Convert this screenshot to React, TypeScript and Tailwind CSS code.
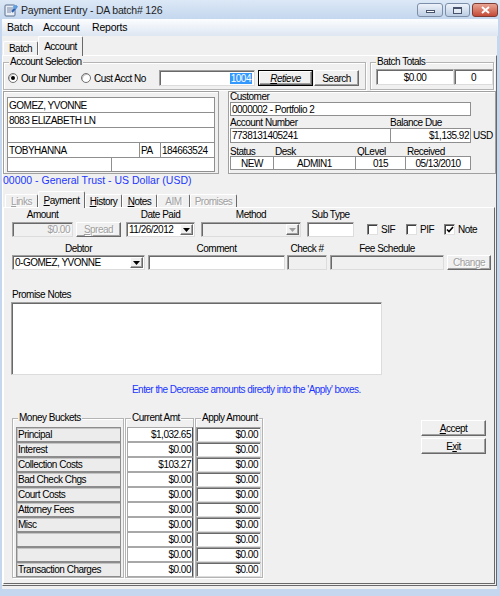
import React from "react";

const FONT = "font-['Liberation_Sans',Arial,sans-serif]";
const sunken =
  "border border-[#a0a0a0] border-r-[#dcdcdc] border-b-[#dcdcdc] shadow-[inset_1px_1px_0_#696969]";
const raised =
  "bg-[#f0f0f0] border border-white border-r-[#696969] border-b-[#696969] shadow-[inset_-1px_-1px_0_#a0a0a0]";
const grayText = "text-[#a0a0a0] [text-shadow:1px_1px_0_#fff]";

const buckets: [string, string][] = [
  ["Principal", "$1,032.65"],
  ["Interest", "$0.00"],
  ["Collection Costs", "$103.27"],
  ["Bad Check Chgs", "$0.00"],
  ["Court Costs", "$0.00"],
  ["Attorney Fees", "$0.00"],
  ["Misc", "$0.00"],
  ["", "$0.00"],
  ["", "$0.00"],
  ["Transaction Charges", "$0.00"],
];

function Group({ label, className = "", children }: { label: string; className?: string; children?: React.ReactNode }) {
  return (
    <fieldset className={"border border-[#b4b4b4] shadow-[inset_1px_1px_0_#fff,1px_1px_0_#fff] " + className}>
      <legend className="ml-[5px] px-[1px] h-[12px] leading-[12px] bg-[#f0f0f0]">{label}</legend>
      {children}
    </fieldset>
  );
}

function DropBtn({ disabled }: { disabled?: boolean }) {
  return (
    <div className={raised + " w-[13px] h-full shrink-0 flex items-center justify-center"}>
      <svg width="7" height="4" viewBox="0 0 7 4">
        <path d="M0 0h7L3.5 4z" fill={disabled ? "#a0a0a0" : "#000"} />
      </svg>
    </div>
  );
}

function Radio({ checked }: { checked?: boolean }) {
  return (
    <span className="w-[10px] h-[10px] rounded-full bg-white border border-[#707070] shadow-[inset_1px_1px_0_#c0c0c0] flex items-center justify-center shrink-0">
      {checked && <span className="w-[4px] h-[4px] rounded-full bg-black" />}
    </span>
  );
}

function Check({ checked }: { checked?: boolean }) {
  return (
    <span className="w-[11px] h-[11px] bg-white border border-[#808080] border-r-[#e0e0e0] border-b-[#e0e0e0] shadow-[inset_1px_1px_0_#404040] flex items-center justify-center shrink-0">
      {checked && (
        <svg width="8" height="7" viewBox="0 0 8 7">
          <path d="M1 3.5l2 2L7 1" stroke="#000" strokeWidth="1.6" fill="none" />
        </svg>
      )}
    </span>
  );
}

function AppIcon() {
  return (
    <svg width="14" height="14" viewBox="0 0 14 14">
      <rect x="1" y="2" width="10" height="11" rx="1" fill="#e8eef6" stroke="#5a6f8c" />
      <path d="M3 5h6M3 7h6M3 9h4" stroke="#7a8ca6" />
      <path d="M8 9l5-6" stroke="#2d5fb0" strokeWidth="2" />
      <circle cx="11" cy="4" r="2" fill="#5fa0e0" />
    </svg>
  );
}

export default function App() {
  return (
    <div className={"w-[500px] h-[596px] flex flex-col overflow-hidden bg-[#c4d7ee] text-black text-[10px] tracking-[-0.5px] " + FONT}>
      {/* title bar */}
      <div className="h-[19px] shrink-0 flex bg-linear-to-b from-[#dce8f6] to-[#c4d7ee]">
        <div className="ml-[4px] mt-[3px]">
          <AppIcon />
        </div>
        <span className="ml-[3px] text-[10.5px] tracking-[-0.2px] leading-[21px] text-[#1e1e1e]">Payment Entry - DA batch# 126</span>
        <div className="ml-auto mr-[2px] mt-[3px] flex gap-[2px] h-[14px]">
          <div className="w-[26px] rounded-[3px] border border-[#7d8ea8] bg-linear-to-b from-[#eef3fa] to-[#bccde3] flex items-end justify-center pb-[3px]">
            <span className="w-[9px] h-[3px] bg-white border border-[#46536a]" />
          </div>
          <div className="w-[25px] rounded-[3px] border border-[#7d8ea8] bg-linear-to-b from-[#eef3fa] to-[#bccde3] flex items-center justify-center">
            <span className="w-[9px] h-[7px] border border-[#46536a] border-t-2 bg-white/40" />
          </div>
          <div className="w-[26px] rounded-[3px] border border-[#7e3b33] bg-linear-to-b from-[#e8a493] to-[#c34a37] flex items-center justify-center">
            <svg width="9" height="8" viewBox="0 0 9 8">
              <path d="M1 1l7 6M8 1L1 7" stroke="#fff" strokeWidth="2" />
            </svg>
          </div>
        </div>
      </div>

      {/* menu bar */}
      <div className="h-[17px] shrink-0 mx-[2px] flex items-center bg-linear-to-b from-[#fcfdfe] to-[#dde6f2] text-[10.5px] tracking-[-0.2px]">
        <span className="ml-[5px] w-[36px]">Batch</span>
        <span className="w-[49px]">Account</span>
        <span>Reports</span>
      </div>

      {/* client */}
      <div className="flex-1 min-h-0 ml-[2px] mr-[3px] mb-[7px] bg-[#f0f0f0] flex flex-col">
        <div className="h-[19px] shrink-0 flex items-end pl-[1px]">
          <div className="w-[35px] h-[14px] border-t border-l border-white border-r border-r-[#696969] rounded-t-[2px] flex items-center justify-center">Batch</div>
          <div className="w-[45px] h-[20px] -mb-[1px] relative bg-[#f0f0f0] border-t border-l border-white border-r border-r-[#696969] rounded-t-[2px] flex items-center justify-center">Account</div>
        </div>

        {/* outer panel */}
        <div className="flex-1 min-h-0 mb-[3px] flex flex-col border border-white border-r-[#696969] border-b-[#696969]">
          {/* row 1 */}
          <div className="flex h-[34px] shrink-0">
            <Group label="Account Selection" className="w-[363px]">
              <div className="flex items-center h-[16px] mt-[2px]">
                <div className="w-[73px] pl-[4px] flex items-center gap-[3px]">
                  <Radio checked />
                  <span>Our Number</span>
                </div>
                <div className="w-[82px] pl-[4px] flex items-center gap-[3px]">
                  <Radio />
                  <span>Cust Acct No</span>
                </div>
                <div className={sunken + " bg-white w-[96px] h-full flex items-center justify-end pr-[2px]"}>
                  <span className="bg-[#3399ff] text-white leading-[11px] px-[1px]">1004</span>
                </div>
                <div className="ml-[3px] w-[55px] h-full border border-black">
                  <div className={raised + " h-full flex items-center justify-center italic"}>
                    <span>
                      <u>R</u>etieve
                    </span>
                  </div>
                </div>
                <div className={raised + " ml-[1px] w-[45px] h-full flex items-center justify-center"}>Search</div>
              </div>
            </Group>
            <Group label="Batch Totals" className="ml-[4px] w-[124px]">
              <div className="flex h-[16px] mt-[1px] pl-[5px]">
                <div className={sunken + " bg-white w-[78px] h-full flex items-center justify-center"}>$0.00</div>
                <div className={sunken + " bg-white w-[39px] h-full flex items-center justify-center"}>0</div>
              </div>
            </Group>
          </div>

          {/* row 2 */}
          <div className="flex h-[83px] shrink-0 mt-[1px]">
            <div className="w-[216px] border border-[#a0a0a0] shadow-[inset_1px_1px_0_#fff] pt-[5px] pl-[3px]">
              <div className="w-[208px] bg-white border border-[#8f8f8f] flex flex-col">
                <div className="h-[15px] border-b border-[#8f8f8f] flex items-center pl-[1px]">GOMEZ, YVONNE</div>
                <div className="h-[15px] border-b border-[#8f8f8f] flex items-center pl-[1px]">8083 ELIZABETH LN</div>
                <div className="h-[15px] border-b border-[#8f8f8f]" />
                <div className="h-[15px] border-b border-[#8f8f8f] flex">
                  <div className="w-[132px] border-r border-[#8f8f8f] flex items-center pl-[1px]">TOBYHANNA</div>
                  <div className="w-[21px] border-r border-[#8f8f8f] flex items-center pl-[1px]">PA</div>
                  <div className="flex-1 flex items-center pl-[1px]">184663524</div>
                </div>
                <div className="h-[13px] flex">
                  <div className="w-[104px] border-r border-[#8f8f8f]" />
                  <div className="flex-1" />
                </div>
              </div>
            </div>
            <div className="ml-[9px] w-[268px] border border-[#a0a0a0] shadow-[inset_1px_1px_0_#fff] pl-[1px] flex flex-col">
              <div className="h-[10px] leading-[10px]">Customer</div>
              <div className="w-[241px] h-[14px] bg-white border border-[#8f8f8f] flex items-center pl-[1px]">0000002 - Portfolio 2</div>
              <div className="flex h-[10px] leading-[10px] mt-[2px]">
                <span className="w-[160px]">Account Number</span>
                <span>Balance Due</span>
              </div>
              <div className="flex items-center h-[15px]">
                <div className="w-[161px] h-full bg-white border border-[#8f8f8f] flex items-center pl-[1px]">7738131405241</div>
                <div className="w-[81px] h-full -ml-[1px] bg-white border border-[#8f8f8f] flex items-center justify-end pr-[1px]">$1,135.92</div>
                <span className="ml-[2px]">USD</span>
              </div>
              <div className="flex h-[9px] leading-[9px] mt-[4px]">
                <span className="w-[45px]">Status</span>
                <span className="w-[82px]">Desk</span>
                <span className="w-[50px]">QLevel</span>
                <span>Received</span>
              </div>
              <div className="flex w-[241px] h-[14px] bg-white border border-[#8f8f8f]">
                <div className="w-[43px] border-r border-[#8f8f8f] flex items-center justify-center">NEW</div>
                <div className="w-[82px] border-r border-[#8f8f8f] flex items-center justify-center">ADMIN1</div>
                <div className="w-[50px] border-r border-[#8f8f8f] flex items-center justify-center">015</div>
                <div className="flex-1 flex items-center justify-center">05/13/2010</div>
              </div>
            </div>
          </div>

          {/* trust line */}
          <div className="h-[13px] shrink-0 leading-[13px] text-[10.5px] tracking-normal text-[#1b36ff]">
            00000 - General Trust - US Dollar (USD)
          </div>

          {/* lower tabs */}
          <div className="h-[20px] shrink-0 flex items-end pl-[2px]">
            <div className={"w-[33px] h-[13px] border-t border-l border-white border-r border-r-[#696969] rounded-t-[2px] flex items-center justify-center " + grayText}>
              <span>
                <u>L</u>inks
              </span>
            </div>
            <div className="w-[47px] h-[17px] -mb-[1px] relative bg-[#f0f0f0] border-t border-l border-white border-r border-r-[#696969] rounded-t-[2px] flex items-center justify-center">
              <span>
                <u>P</u>ayment
              </span>
            </div>
            <div className="w-[37px] h-[13px] border-t border-l border-white border-r border-r-[#696969] rounded-t-[2px] flex items-center justify-center">
              <span>
                <u>H</u>istory
              </span>
            </div>
            <div className="w-[35px] h-[13px] border-t border-l border-white border-r border-r-[#696969] rounded-t-[2px] flex items-center justify-center">
              <span>
                <u>N</u>otes
              </span>
            </div>
            <div className={"w-[33px] h-[13px] border-t border-l border-white border-r border-r-[#696969] rounded-t-[2px] flex items-center justify-center " + grayText}>AIM</div>
            <div className={"w-[47px] h-[13px] border-t border-l border-white border-r border-r-[#696969] rounded-t-[2px] flex items-center justify-center " + grayText}>Promises</div>
          </div>

          {/* payment panel */}
          <div className="flex-1 min-h-0 mr-[1px] mb-[1px] flex flex-col border border-white border-r-[#696969] border-b-[#696969]">
            {/* fields row 1 */}
            <div className="flex items-end mt-[1px] shrink-0">
              <div className="ml-[8px] w-[61px] flex flex-col items-center">
                <span className="h-[11px] leading-[11px] mb-[2px]">Amount</span>
                <div className={sunken + " bg-[#f0f0f0] w-full h-[15px] flex items-center justify-end pr-[2px] " + grayText}>$0.00</div>
              </div>
              <div className={raised + " ml-[3px] w-[45px] h-[15px] flex items-center justify-center " + grayText}>
                <span>
                  <u>S</u>pread
                </span>
              </div>
              <div className="ml-[5px] w-[69px] flex flex-col items-center">
                <span className="h-[11px] leading-[11px] mb-[2px]">Date Paid</span>
                <div className={sunken + " bg-white w-full h-[15px] flex items-center pl-[2px] pr-[1px] py-[1px]"}>
                  <span className="flex-1">11/26/2012</span>
                  <DropBtn />
                </div>
              </div>
              <div className="ml-[6px] w-[100px] flex flex-col items-center">
                <span className="h-[11px] leading-[11px] mb-[2px]">Method</span>
                <div className={sunken + " bg-[#f0f0f0] w-full h-[15px] flex justify-end p-[1px]"}>
                  <DropBtn disabled />
                </div>
              </div>
              <div className="ml-[6px] w-[47px] flex flex-col items-center">
                <span className="h-[11px] leading-[11px] mb-[2px]">Sub Type</span>
                <div className={sunken + " bg-white w-full h-[15px]"} />
              </div>
              <div className="ml-[13px] w-[39px] h-[15px] flex items-center gap-[3px]">
                <Check />
                <span>SIF</span>
              </div>
              <div className="w-[38px] h-[15px] flex items-center gap-[3px]">
                <Check />
                <span>PIF</span>
              </div>
              <div className="h-[15px] flex items-center gap-[3px]">
                <Check checked />
                <span>Note</span>
              </div>
            </div>

            {/* fields row 2 */}
            <div className="flex items-end mt-[6px] shrink-0">
              <div className="ml-[8px] w-[133px] flex flex-col items-center">
                <span className="h-[11px] leading-[11px] mb-[1px]">Debtor</span>
                <div className={sunken + " bg-white w-full h-[15px] flex items-center pl-[2px] py-[1px] pr-[1px]"}>
                  <span className="flex-1">0-GOMEZ, YVONNE</span>
                  <DropBtn />
                </div>
              </div>
              <div className="ml-[3px] w-[137px] flex flex-col items-center">
                <span className="h-[11px] leading-[11px] mb-[1px]">Comment</span>
                <div className={sunken + " bg-white w-full h-[15px]"} />
              </div>
              <div className="ml-[2px] w-[40px] flex flex-col items-center">
                <span className="h-[11px] leading-[11px] mb-[1px] whitespace-nowrap">Check #</span>
                <div className={sunken + " bg-[#f0f0f0] w-full h-[15px]"} />
              </div>
              <div className="ml-[3px] w-[114px] flex flex-col items-center">
                <span className="h-[11px] leading-[11px] mb-[1px]">Fee Schedule</span>
                <div className={sunken + " bg-[#f0f0f0] w-full h-[15px]"} />
              </div>
              <div className={raised + " ml-[3px] w-[44px] h-[15px] flex items-center justify-center " + grayText}>Change</div>
            </div>

            {/* promise notes */}
            <div className="ml-[8px] mt-[20px] h-[10px] leading-[10px] shrink-0">Promise Notes</div>
            <div className={sunken + " bg-white ml-[7px] mt-[2px] w-[371px] h-[73px] shrink-0"} />

            <div className="ml-[128px] mt-[10px] h-[10px] leading-[10px] text-[#1b36ff] tracking-[-0.55px] shrink-0">
              Enter the Decrease amounts directly into the 'Apply' boxes.
            </div>

            {/* money buckets */}
            <div className="flex mt-[17px] shrink-0">
              <Group label="Money Buckets" className="ml-[8px] w-[112px]">
                <div className="pl-[3px] pt-[3px] flex flex-col">
                  {buckets.map(([name], i) => (
                    <div
                      key={i}
                      className="w-[105px] h-[15px] bg-[#ececec] border border-[#8c8c8c] shadow-[inset_1px_1px_0_#c4c4c4] flex items-center pl-[1px] whitespace-nowrap"
                    >
                      {name}
                    </div>
                  ))}
                </div>
              </Group>
              <Group label="Current Amt" className="ml-[1px] w-[69px]">
                <div className="pl-[1px] pt-[3px] flex flex-col">
                  {buckets.map(([, amt], i) => (
                    <div
                      key={i}
                      className="w-[66px] h-[15px] bg-white border border-[#a8a8a8] border-r-[#505050] flex items-center justify-end pr-[1px]"
                    >
                      {amt}
                    </div>
                  ))}
                </div>
              </Group>
              <Group label="Apply Amount" className="ml-[1px] w-[68px]">
                <div className="pt-[3px] flex flex-col">
                  {buckets.map((_, i) => (
                    <div key={i} className={sunken + " bg-white w-[65px] h-[15px] flex items-center justify-end pr-[2px]"}>
                      $0.00
                    </div>
                  ))}
                </div>
              </Group>
              <div className="ml-[158px] mt-[8px] self-start flex flex-col gap-[2px]">
                <div className={raised + " w-[65px] h-[16px] flex items-center justify-center"}>
                  <span>
                    <u>A</u>ccept
                  </span>
                </div>
                <div className={raised + " w-[65px] h-[16px] flex items-center justify-center"}>
                  <span>
                    E<u>x</u>it
                  </span>
                </div>
              </div>
            </div>
          </div>
        </div>
      </div>
    </div>
  );
}
